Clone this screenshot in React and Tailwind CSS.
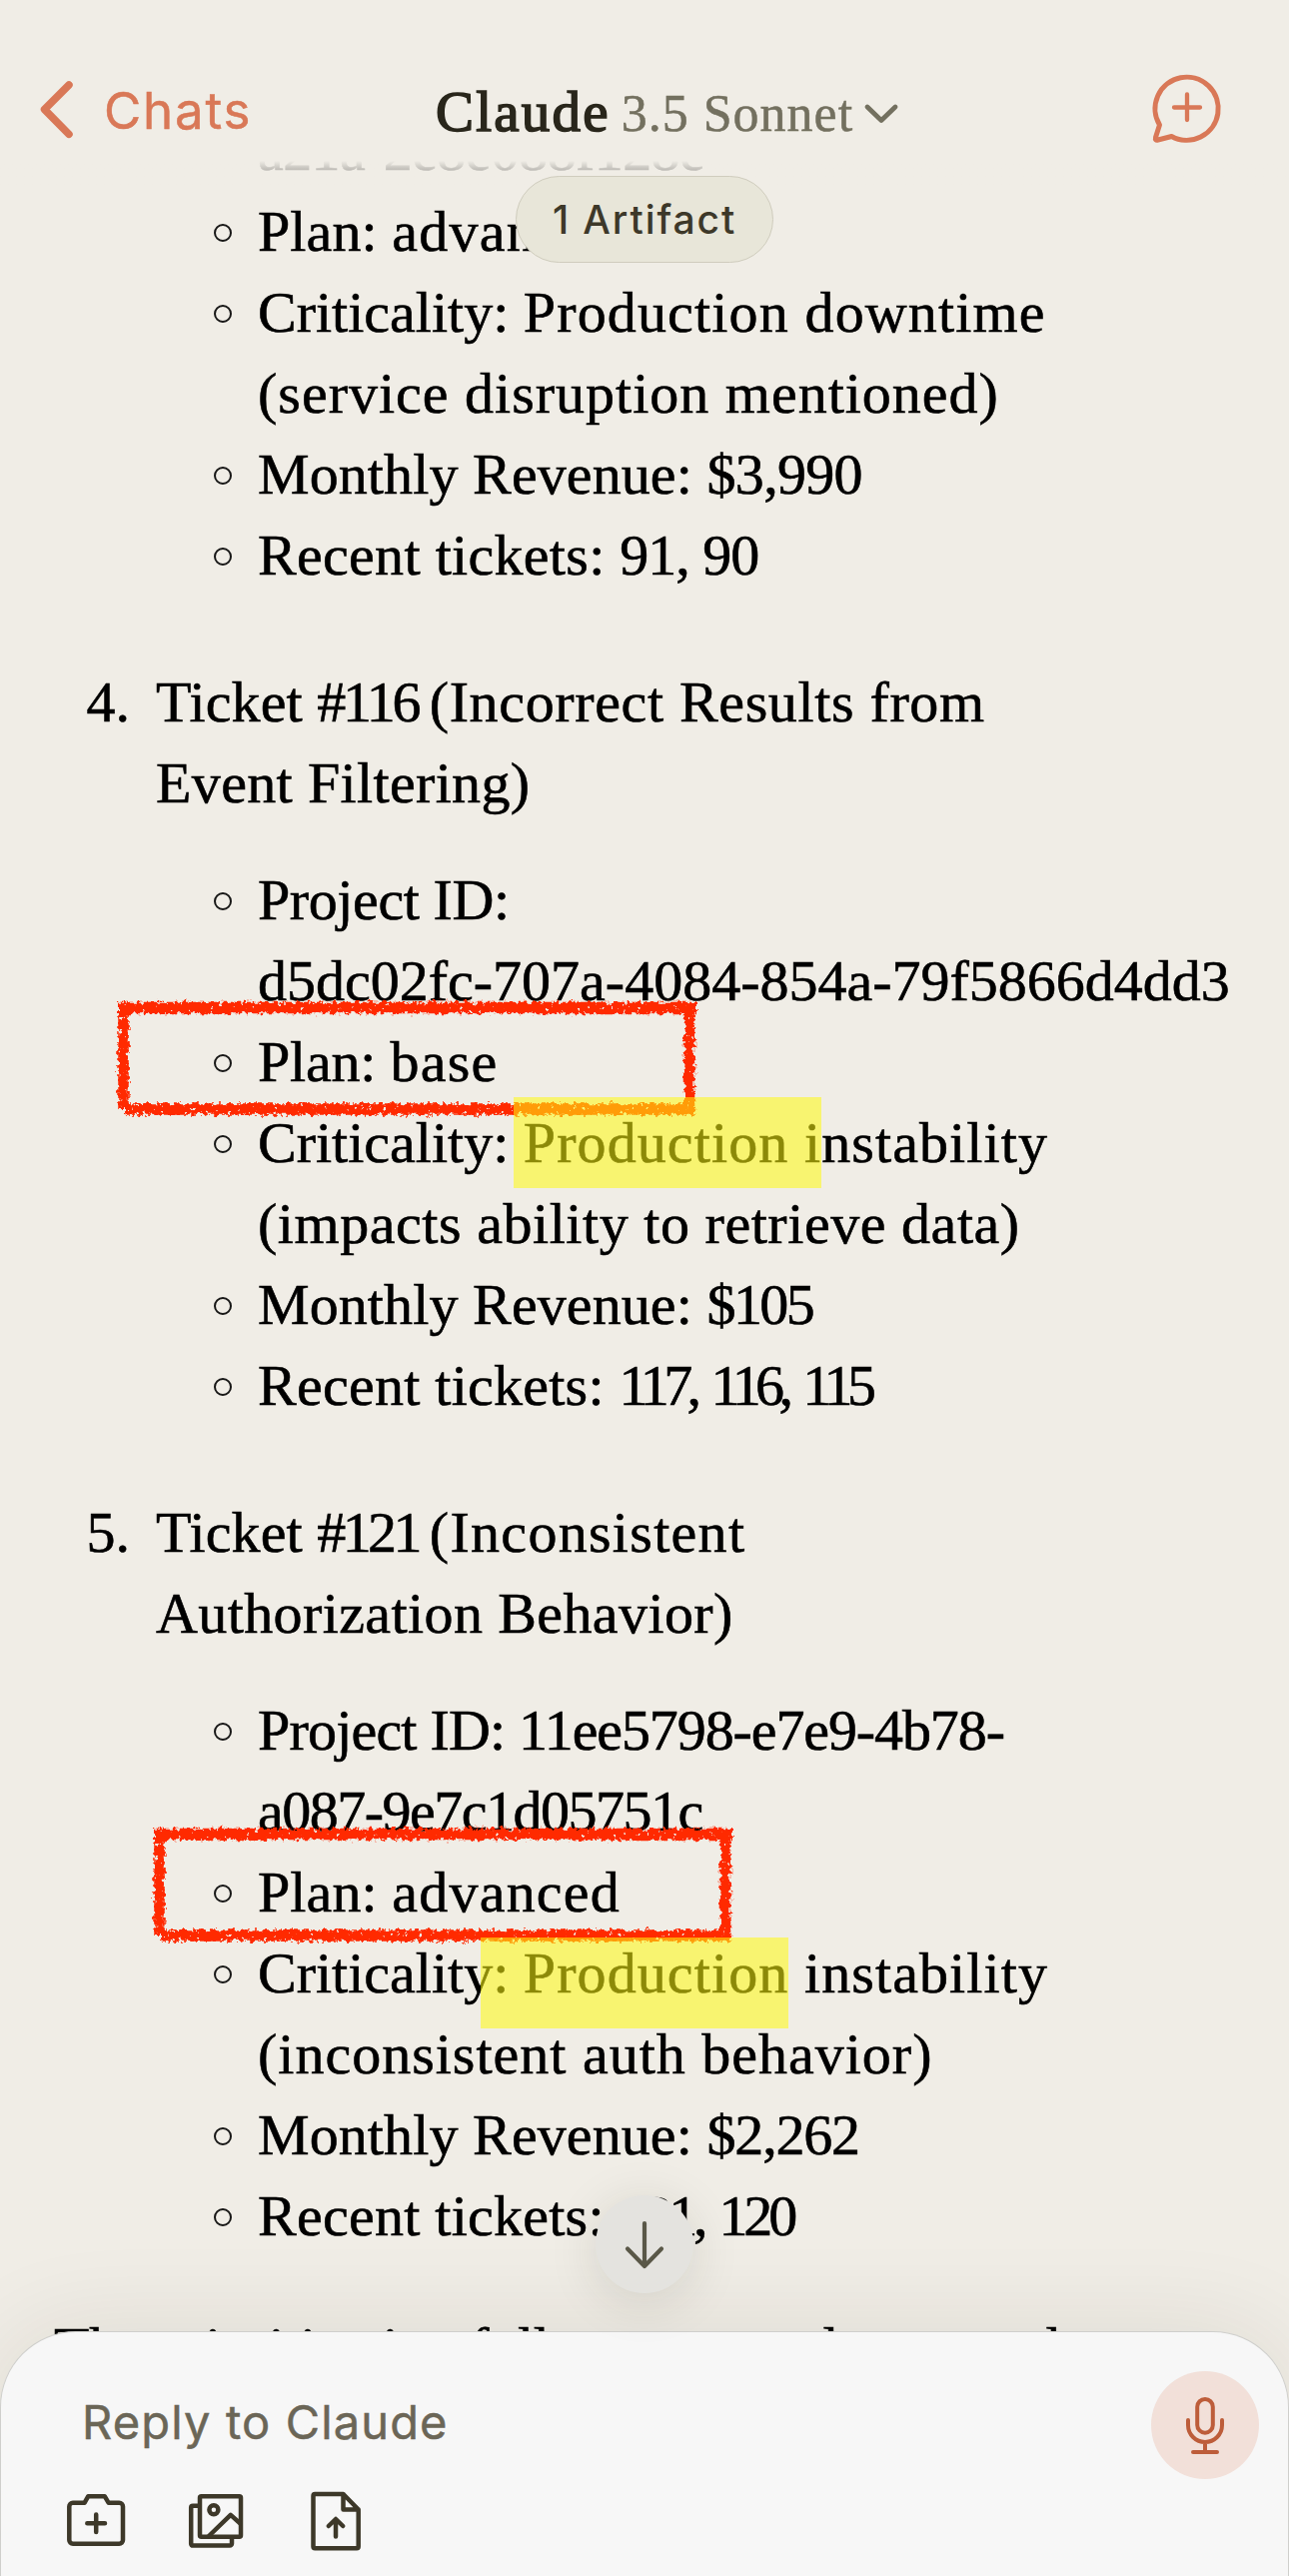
import React from "react";

const SERIF = "font-['Liberation_Serif',serif]";
const SANS = "font-['Inter',sans-serif]";

function Line({ children }) {
  return <div className="h-[81px] whitespace-pre">{children}</div>;
}

function Sub({ children, note }) {
  return (
    <li className={note ? "relative flex" : "flex"}>
      <span className="mt-[33px] mr-[26px] size-[18px] shrink-0 rounded-full border-[2px] border-black/90" />
      <div>{children}</div>
      {note}
    </li>
  );
}

function Item({ number, title, children }) {
  return (
    <li className="mt-[66px] flex">
      <span className="w-[130px] shrink-0 text-right">{number}</span>
      <div className="ml-[26px]">
        {title}
        <ul className="mt-[36px] ml-[58px]">{children}</ul>
      </div>
    </li>
  );
}

/* Crayon-style frame around a list entry */
function Frame({ className, id }) {
  return (
    <svg className={"absolute h-[131px] w-[595px] " + className} viewBox="0 0 595 131" fill="none">
      <defs>
        <filter id={id} x="0" y="0" width="595" height="131" filterUnits="userSpaceOnUse">
          <feTurbulence type="fractalNoise" baseFrequency="0.22" numOctaves="3" seed="7" result="n" />
          <feDisplacementMap in="SourceGraphic" in2="n" scale="9" xChannelSelector="R" yChannelSelector="G" result="d" />
          <feColorMatrix in="n" type="matrix" values="0 0 0 0 0  0 0 0 0 0  0 0 0 0 0  0 0 14 0 -3.2" result="m" />
          <feComposite in="d" in2="m" operator="in" />
        </filter>
      </defs>
      <g filter={`url(#${id})`} stroke="#ff2a00">
        <path d="M8 14.500H587" strokeWidth="11.500" />
        <path d="M580 9V121" strokeWidth="10.500" />
        <path d="M17 116H585" strokeWidth="11.500" />
        <path d="M13.500 9V116" strokeWidth="10.500" />
      </g>
    </svg>
  );
}

function Highlight({ className }) {
  return <span className={"absolute h-[91px] w-[308px] bg-[rgba(255,249,15,0.55)] " + className} />;
}

function Header() {
  return (
    <header className="relative z-10 grid h-[161px] shrink-0 grid-cols-[436px_1fr_auto] bg-[#f0ede6]">
      <div className="flex text-[#d97857]">
        <svg className="mt-[76px] ml-[32px] h-[68px] w-[48px]" viewBox="32 76 48 68" fill="none" stroke="currentColor" strokeWidth="7.500" strokeLinecap="round" strokeLinejoin="round">
          <path d="M69 85L44.500 109.500L69 134.300" />
        </svg>
        <span className={"mt-[80px] ml-[24px] text-[51px] leading-[62px] tracking-[1.8px] [-webkit-text-stroke:0.5px_#d97857] " + SANS}>Chats</span>
      </div>
      <div className={"flex whitespace-nowrap pt-[79px] leading-[66px] " + SERIF}>
        <span className="text-[57px] tracking-[2.2px] text-[#29261b] [-webkit-text-stroke:1.6px_#29261b]">Claude</span>
        <span className="ml-[11px] pt-[2px] text-[52px] tracking-[1px] text-[#73705f] [-webkit-text-stroke:0.5px_#73705f]">3.5 Sonnet</span>
        <svg className="mt-[21px] ml-[8px] h-[28px] w-[40px]" viewBox="0 0 40 28" fill="none" stroke="#73705f" strokeWidth="4.800" strokeLinecap="round" strokeLinejoin="round">
          <path d="M6 7L20 20.500L34 7" />
        </svg>
      </div>
      <svg className="mt-[66px] mr-[62px] h-[84px] w-[82px]" viewBox="1146 66 82 84" fill="none" stroke="#d97857" strokeWidth="5" strokeLinecap="round" strokeLinejoin="round">
        <path d="M1160.500 125L1156.500 137.500q-.8 3.200 2.400 2.500L1172.500 136.500A31.600 31.600 0 1 0 1160.500 125Z" />
        <path d="M1188 94.500V120M1175 107.500H1201" strokeWidth="4.300" />
      </svg>
    </header>
  );
}

function Composer() {
  return (
    <footer className="relative z-10 -mt-[72px] h-[245px] shrink-0 rounded-t-[76px] border border-b-0 border-[#cfcfcc] bg-[#f7f7f7] shadow-[0_0_100px_rgba(40,35,10,0.09)]">
      <div className="mt-[39px] mr-[29px] ml-[81px] flex h-[108px] items-center justify-between">
        <span className={"pb-[6px] text-[47px] tracking-[1.15px] text-[#6b6657] [-webkit-text-stroke:0.5px_#6b6657] " + SANS}>Reply to Claude</span>
        <span className="size-[108px] rounded-full bg-[#f2e0d9]">
          <svg className="size-[108px]" viewBox="1152 2373 108 108" fill="none" stroke="#bd5d3a" strokeWidth="4" strokeLinecap="round" strokeLinejoin="round">
            <rect x="1198.200" y="2401" width="15.600" height="33.700" rx="7.800" />
            <path d="M1189 2422V2427a17 17 0 0 0 34 0V2422M1206 2444.500V2454M1194 2454H1218" />
          </svg>
        </span>
      </div>
      <div className="mt-[6px] ml-[59px] flex gap-[48px] text-[#3d3829]">
        <svg className="size-[72px]" viewBox="60 2487 72 72" fill="none" stroke="currentColor" strokeWidth="4.500" strokeLinecap="round" strokeLinejoin="round">
          <path d="M73 2504.800H84.500L88.300 2498.200H104.700L108.700 2504.800H119.300a3.700 3.700 0 0 1 3.700 3.700V2542a3.700 3.700 0 0 1-3.700 3.700H73a3.700 3.700 0 0 1-3.700-3.700V2508.500a3.700 3.700 0 0 1 3.700-3.700Z" />
          <path d="M96.200 2516.500V2534M87.300 2525.300H105" />
        </svg>
        <svg className="size-[72px]" viewBox="180 2487 72 72" fill="none" stroke="currentColor" strokeWidth="4.500" strokeLinecap="round" strokeLinejoin="round">
          <rect x="200" y="2498.200" width="41" height="40.500" rx="1.500" />
          <path d="M198.500 2507.700H193a1.800 1.800 0 0 0-1.800 1.800V2545.800a1.800 1.800 0 0 0 1.800 1.800H230a2 2 0 0 0 2-2V2541" />
          <circle cx="213.900" cy="2511.700" r="4.500" />
          <path d="M209 2538L230.800 2516.800L240.500 2525.500" />
        </svg>
        <svg className="size-[72px]" viewBox="300 2487 72 72" fill="none" stroke="currentColor" strokeWidth="4.500" strokeLinecap="round" strokeLinejoin="round">
          <path d="M343.500 2496H315.200a1.700 1.700 0 0 0-1.700 1.700V2548.500a1.700 1.700 0 0 0 1.700 1.700H357a1.700 1.700 0 0 0 1.700-1.700V2511.500ZV2511.500H358.700" />
          <path d="M336 2538.500V2521.500M328.800 2528L336 2521L343.200 2528" />
        </svg>
      </div>
    </footer>
  );
}

export default function App() {
  return (
    <div className="relative flex h-[2578px] w-[1290px] flex-col overflow-hidden bg-[#f0ede6] text-black">
      <Header />
      <main className={"relative min-h-0 flex-1 overflow-hidden text-[58px] leading-[81px] [-webkit-text-stroke:0.6px_currentColor] " + SERIF}>
        <div className="-mt-[51px]">
          <ul className="ml-[214px]">
            <li className="pl-[44px]"><Line><span className="tracking-[-0.6px]">a21a-2e8e088f128e</span></Line></li>
            <Sub><Line><span className="tracking-[0.1px]">Plan: </span><span className="tracking-[1.2px]">advanced</span></Line></Sub>
            <Sub>
              <Line>Criticality: <span className="tracking-[1.15px]">Production downtime</span></Line>
              <Line><span className="tracking-[1px]">(service disruption mentioned)</span></Line>
            </Sub>
            <Sub><Line><span className="tracking-[0.1px]">Monthly Revenue: </span><span className="tracking-[-0.7px]">$3,990</span></Line></Sub>
            <Sub><Line><span className="tracking-[0.3px]">Recent tickets: </span><span className="tracking-[-1px]">91, 90</span></Line></Sub>
          </ul>
          <ol>
            <Item
              number="4."
              title={
                <>
                  <Line><span className="tracking-[0.1px]">Ticket </span><span className="tracking-[-3.2px]">#116 </span><span className="tracking-[0.65px]">(Incorrect Results from</span></Line>
                  <Line><span className="tracking-[0.35px]">Event Filtering)</span></Line>
                </>
              }
            >
              <Sub>
                <Line><span className="tracking-[-0.4px]">Project ID:</span></Line>
                <Line>d5dc02fc-707a-4084-854a-79f5866d4dd3</Line>
              </Sub>
              <Sub note={<Frame id="crayon-a" className="-top-[28px] -left-[104px]" />}>
                <Line><span className="tracking-[-0.2px]">Plan: </span><span className="tracking-[1.2px]">base</span></Line>
              </Sub>
              <Sub note={<Highlight className="-top-[5px] left-[300px]" />}>
                <Line>Criticality: <span className="tracking-[1.1px]">Production instability</span></Line>
                <Line><span className="tracking-[0.55px]">(impacts ability to retrieve data)</span></Line>
              </Sub>
              <Sub><Line><span className="tracking-[0.1px]">Monthly Revenue: </span><span className="tracking-[-2.6px]">$105</span></Line></Sub>
              <Sub><Line><span className="tracking-[0.25px]">Recent tickets: </span><span className="tracking-[-5.6px] [word-spacing:6px]">117, 116, 115</span></Line></Sub>
            </Item>
            <Item
              number="5."
              title={
                <>
                  <Line><span className="tracking-[0.1px]">Ticket </span><span className="tracking-[-3.6px]">#121 </span><span className="tracking-[1.3px]">(Inconsistent</span></Line>
                  <Line><span className="tracking-[0.4px]">Authorization Behavior)</span></Line>
                </>
              }
            >
              <Sub>
                <Line><span className="tracking-[-0.8px]">Project ID: </span><span className="tracking-[-1.1px]">11ee5798-e7e9-4b78-</span></Line>
                <Line><span className="tracking-[-1.5px]">a087-9e7c1d05751c</span></Line>
              </Sub>
              <Sub note={<Frame id="crayon-b" className="-top-[32px] -left-[68px]" />}>
                <Line><span className="tracking-[0.1px]">Plan: </span><span className="tracking-[1.2px]">advanced</span></Line>
              </Sub>
              <Sub note={<Highlight className="top-[5px] left-[267px]" />}>
                <Line>Criticality: <span className="tracking-[1.1px]">Production instability</span></Line>
                <Line><span className="tracking-[1px]">(inconsistent auth behavior)</span></Line>
              </Sub>
              <Sub><Line><span className="tracking-[0.1px]">Monthly Revenue: </span><span className="tracking-[-1.2px]">$2,262</span></Line></Sub>
              <Sub><Line><span className="tracking-[0.25px]">Recent tickets: </span><span className="tracking-[-4.2px] [word-spacing:5px]">121, 120</span></Line></Sub>
            </Item>
          </ol>
          <p className="mt-[51px] ml-[54px] whitespace-nowrap tracking-[-0.3px]">The prioritization follows your rules around</p>
        </div>
        <div className="absolute inset-x-0 top-0 h-[44px] bg-linear-to-b from-[#f0ede6] to-transparent" />
      </main>
      <Composer />
      <div className={"absolute top-[176px] left-[516px] z-20 flex h-[87px] w-[258px] items-center justify-center rounded-[44px] border border-[#cfccbd] bg-[#e8e6d9] pt-[2px] text-[39px] font-medium tracking-[1.9px] whitespace-nowrap text-[#3d3829] " + SANS}>
        1 Artifact
      </div>
      <div className="absolute top-[2197px] left-[596px] z-10 size-[98px] rounded-full bg-[#e4e3df] shadow-[0_8px_50px_rgba(40,35,20,0.13)]">
        <svg className="size-[98px]" viewBox="596 2197 98 98" fill="none" stroke="#5a5848" strokeWidth="4.200" strokeLinecap="round" strokeLinejoin="round">
          <path d="M645 2225V2268M628 2250.500L645 2268L662 2250.500" />
        </svg>
      </div>
    </div>
  );
}
